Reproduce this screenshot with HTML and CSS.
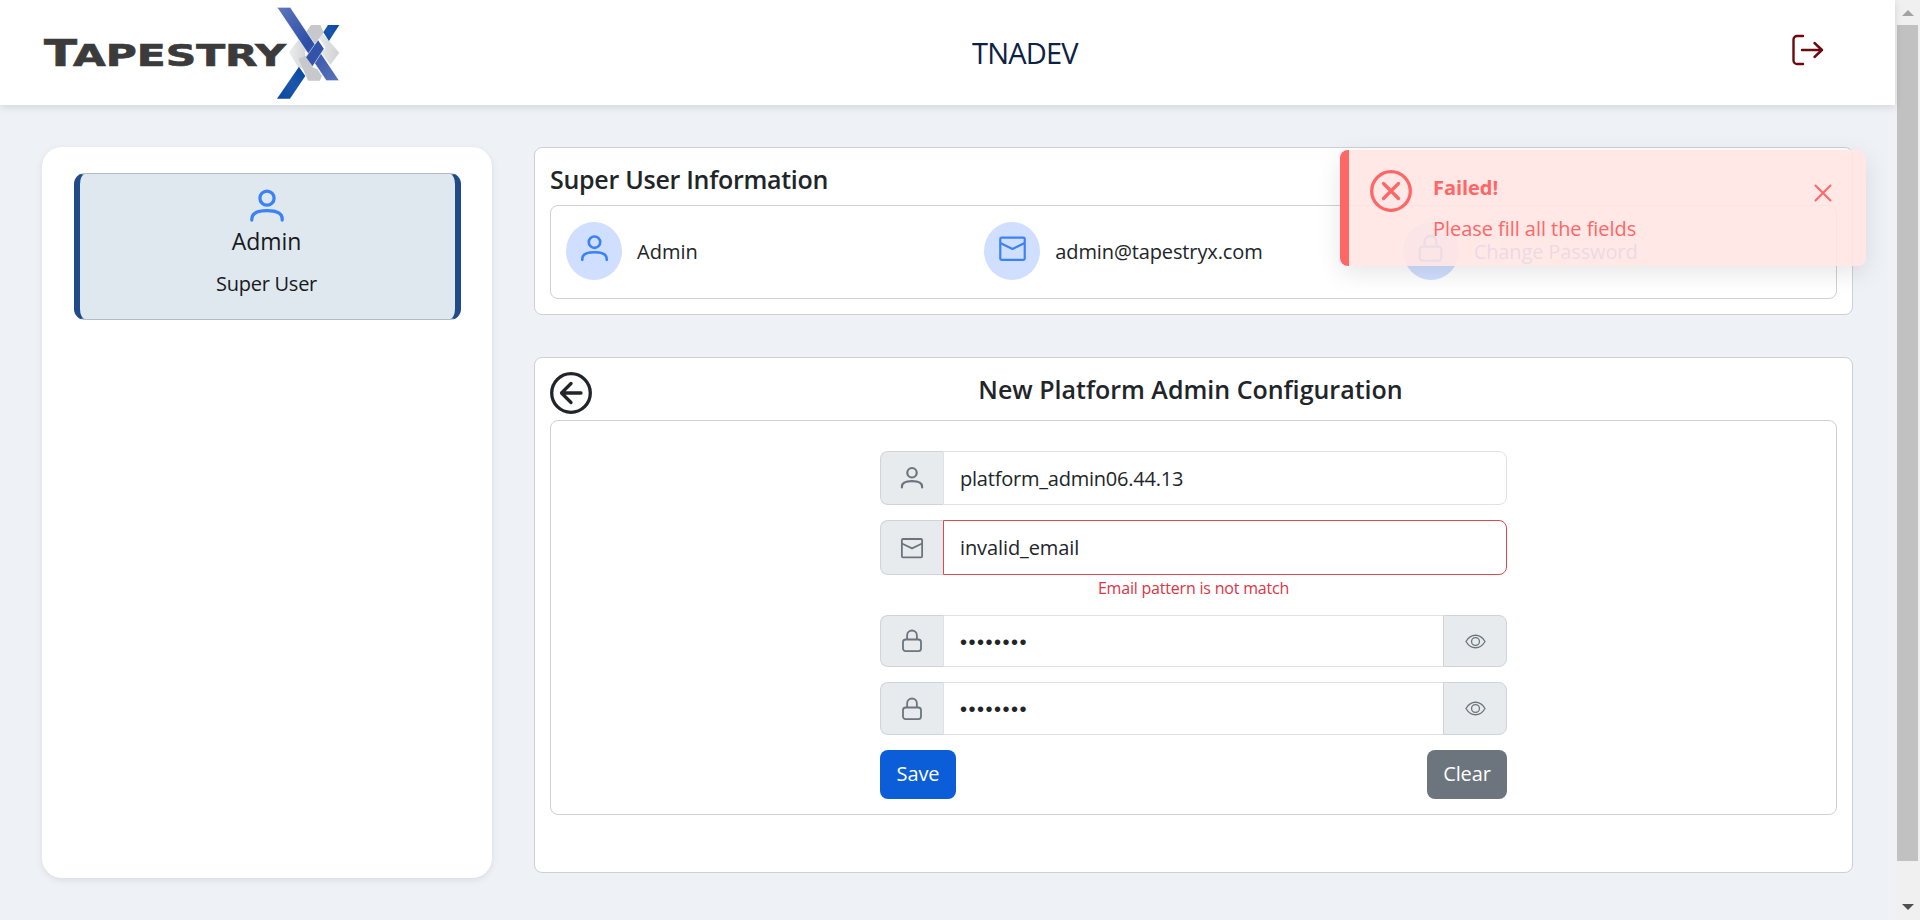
FILE: index.html
```
<!DOCTYPE html>
<html lang="en">
<head>
<meta charset="utf-8">
<title>TapestryX</title>
<link rel="stylesheet" href="styles.css">
</head>
<body>
<svg class="defs" width="0" height="0" aria-hidden="true">
  <symbol id="user" viewBox="0 0 32 32"><g fill="none" stroke="currentColor" stroke-width="2.900" stroke-linecap="round"><circle cx="16" cy="9" r="6.300"/><path d="M2.500 28.500v-1c0-4.400 3.600-7.400 13.500-7.400s13.500 3 13.500 7.400v1"/></g></symbol>
  <symbol id="mail" viewBox="0 0 32 32"><g fill="none" stroke="currentColor" stroke-width="2.400" stroke-linejoin="round"><rect x="2.500" y="4" width="27" height="24.500" rx="1.500"/><path d="M2.500 10 16 16.500 29.500 10"/></g></symbol>
  <symbol id="lock" viewBox="0 0 32 32"><g fill="none" stroke="currentColor" stroke-width="2.400"><rect x="4" y="14" width="24" height="15.500" rx="3.500"/><path d="M9.500 14V8.500a6.500 6.500 0 0 1 13 0V14"/></g></symbol>
  <symbol id="eye" viewBox="0 0 32 32"><g fill="none" stroke="currentColor" stroke-width="2"><path d="M1.500 16C5 10 10 6.500 16 6.500S27 10 30.500 16C27 22 22 25.500 16 25.500S5 22 1.500 16z"/><circle cx="16" cy="16" r="6"/></g></symbol>
</svg>
<div class="page">
  <header class="top">
    <svg class="logo" viewBox="0 0 300 105" role="img" aria-label="TapestryX">
      <defs>
        <linearGradient id="g1" x1="0" y1="0" x2="1" y2="1"><stop offset="0" stop-color="#5d77bd"/><stop offset=".5" stop-color="#2d4ea6"/><stop offset="1" stop-color="#5b75bb"/></linearGradient>
        <linearGradient id="g2" x1="0" y1="1" x2="1" y2="0"><stop offset="0" stop-color="#0546a0"/><stop offset=".5" stop-color="#1c56aa"/><stop offset="1" stop-color="#0546a0"/></linearGradient>
        <linearGradient id="g3" x1="0" y1="0" x2="1" y2="0"><stop offset="0" stop-color="#eceeee"/><stop offset="1" stop-color="#cfd1d2"/></linearGradient>
      </defs>
      <text class="mark" x="2" y="65.500" font-size="37" textLength="33" lengthAdjust="spacingAndGlyphs">T</text>
      <text class="mark" x="31" y="65.500" font-size="31" textLength="213" lengthAdjust="spacingAndGlyphs">APESTRY</text>
      <g transform="translate(-12 0) scale(.3333)">
        <path fill="url(#g3)" d="M862 76l14 22 52 60-27 37-26-36 12-16-17-24-14-22z"/>
        <path fill="#c6c8c9" d="M843 75h28l10 22-17 23-12 16-26-36z"/>
        <path fill="url(#g3)" d="M805 120l-28 37 27 44 28 8-8-52 12-16z"/>
        <path fill="#c6c8c9" d="M806 176l28-12 14 38 14 6 14 20-6 14h-36z"/>
        <path fill="url(#g1)" stroke="#fff" stroke-width="2" d="M741 22h40l147 220h-39z"/>
        <path fill="url(#g2)" d="M741 296h39l46-68-19-28z"/>
        <path fill="url(#g2)" d="M928 75h-34l-14 22 17 26z"/>
        <path fill="#3353ab" d="M864 120l18 27-34 52-20-28z"/>
        <path fill="none" stroke="#dfe6f5" stroke-width="2" d="M828 171l36-51M848 199l34-52"/>
      </g>
    </svg>
    <div class="tenant"><span class="t-tenant">TNADEV</span></div>
    <svg class="logout" viewBox="0 0 32 32"><g fill="none" stroke="#6b0a0e" stroke-width="2.400" stroke-linecap="round" stroke-linejoin="round"><path d="M11 2H5a3.500 3.500 0 0 0-3.500 3.500v21A3.500 3.500 0 0 0 5 30h6M10 16h20M22.500 9l7.500 7-7.500 7"/></g></svg>
  </header>
  <main class="content">
    <aside class="side">
      <div class="who">
        <svg class="who-icon"><use href="#user"/></svg>
        <div class="who-name"><span>Admin</span></div>
        <div class="who-role"><span>Super User</span></div>
      </div>
    </aside>
    <div class="main">
      <section class="card info">
        <h1 class="h t-info">Super User Information</h1>
        <div class="box info-row">
          <div class="cell"><i class="dot"><svg><use href="#user"/></svg></i><span class="t-admin">Admin</span></div>
          <div class="cell"><i class="dot"><svg><use href="#mail"/></svg></i><span class="t-mail">admin@tapestryx.com</span></div>
          <div class="cell link"><i class="dot"><svg><use href="#lock"/></svg></i><span class="t-change">Change Password</span></div>
        </div>
      </section>
      <section class="card config">
        <div class="config-head">
          <svg class="back" viewBox="0 0 42 42"><g fill="none" stroke="#212529" stroke-width="3.300" stroke-linecap="round" stroke-linejoin="round"><circle cx="21" cy="21" r="19.300"/><path d="M31 21H11.500M21 11.500 11.500 21l9.500 9.500"/></g></svg>
          <h2 class="h"><span class="t-config">New Platform Admin Configuration</span></h2>
        </div>
        <div class="box form-box">
          <form class="form">
            <div class="group g-name"><i class="addon"><svg><use href="#user"/></svg></i><div class="field"><span class="t-name">platform_admin06.44.13</span></div></div>
            <div class="group g-mail"><i class="addon"><svg><use href="#mail"/></svg></i><div class="field bad"><span class="t-invalid">invalid_email</span></div></div>
            <div class="error"><span class="t-error">Email pattern is not match</span></div>
            <div class="group g-pw"><i class="addon"><svg><use href="#lock"/></svg></i><div class="field"><span class="dots">••••••••</span></div><i class="addon end"><svg><use href="#eye"/></svg></i></div>
            <div class="group g-pw2"><i class="addon"><svg><use href="#lock"/></svg></i><div class="field"><span class="dots">••••••••</span></div><i class="addon end"><svg><use href="#eye"/></svg></i></div>
            <div class="actions"><button type="button" class="btn save">Save</button><button type="button" class="btn clear">Clear</button></div>
          </form>
        </div>
      </section>
    </div>
  </main>
  <div class="toast">
    <svg class="toast-icon" viewBox="0 0 42 42"><g fill="none" stroke="#ff6666" stroke-width="3.300" stroke-linecap="round"><circle cx="21" cy="21" r="19.300"/><path d="M13.500 13.500l15 15M28.500 13.500l-15 15"/></g></svg>
    <div class="toast-text"><b class="t-failed">Failed!</b><span class="t-fill">Please fill all the fields</span></div>
    <svg class="close" viewBox="0 0 18 18"><path d="M1.500 1.500l15 15M16.500 1.500l-15 15" fill="none" stroke="#ff6666" stroke-width="2" stroke-linecap="round"/></svg>
  </div>
</div>
<div class="scroll"><i class="up"></i><i class="thumb"></i><i class="down"></i></div>
</body>
</html>
```
FILE: styles.css
```
* { box-sizing: border-box; }
body { margin: 0; width: 1920px; height: 920px; overflow: hidden; display: flex; background: #eef1f6; color: #212529; font: 20px/32px "Open Sans", "Noto Sans", sans-serif; white-space: nowrap; }
.defs { position: absolute; }
svg { display: block; flex: none; }
.page { position: relative; width: 1895px; height: 920px; }
.top { height: 105px; background: #fff; box-shadow: 0 2px 8px rgba(0,0,0,.12); display: flex; align-items: center; padding: 0 69px 0 42px; }
.logo { width: 300px; height: 105px; }
.mark { font-family: "DejaVu Sans", sans-serif; font-weight: bold; fill: #3b3b3b; stroke: #3b3b3b; stroke-width: .7px; }
.tenant { width: 1368px; padding-left: 630px; font-size: 29px; line-height: 40px; color: #0c2244; }
.t-tenant { letter-spacing: -.8px; }
.logout { width: 32px; height: 32px; margin: -6px 0 0 82px; }
.content { display: flex; gap: 42px; padding: 42px; }
.side { width: 450px; height: 731px; border-radius: 20px; background: #fff; box-shadow: 0 2px 7px rgba(0,0,0,.09); padding: 26px 31px 0 32px; }
.who { height: 147px; border: 1px solid #b3bcc6; border-left: 6px solid #204a8a; border-right: 6px solid #204a8a; border-radius: 11px; background: #dfe7ef; display: flex; flex-direction: column; align-items: center; color: #181a1c; padding: 14px 2px 0 0; }
.who-icon { width: 38px; height: 36px; color: #3b82f6; }
.who-name { font-size: 23px; line-height: 34px; letter-spacing: -.1px; }
.who-role { margin-top: 10px; letter-spacing: -.25px; }
.main { width: 1319px; display: flex; flex-direction: column; gap: 42px; }
.card { background: #fff; border: 1px solid #ced0d3; border-radius: 8px; padding: 15px; }
.box { border: 1px solid #ced0d3; border-radius: 8px; }
.h { margin: 0; font-size: 25px; line-height: 32px; font-weight: 600; }
.info { height: 168px; }
.t-info { height: 42px; letter-spacing: -.28px; }
.info-row { height: 94px; display: flex; padding: 16px 15px; }
.cell { width: 419px; display: flex; align-items: flex-start; gap: 15px; line-height: 60px; }
.t-mail, .t-change { letter-spacing: -.12px; }
.dot { width: 56px; height: 58px; border-radius: 50%; background: #d0dfff; color: #3b82f6; display: flex; justify-content: center; padding-top: 12px; }
.dot svg { width: 29px; height: 29px; }
.link { color: #3b66f0; }
.config { height: 516px; }
.config-head { height: 47px; display: flex; align-items: flex-start; }
.back { width: 42px; height: 42px; margin-top: -1px; }
.config-head .h { flex: 1; text-align: center; padding-right: 48px; }
.form-box { height: 395px; padding: 30px 0 0 329px; }
.form { width: 627px; }
.group { display: flex; height: 53px; margin-bottom: 15px; }
.g-name { height: 54px; }
.g-mail { height: 55px; margin-bottom: 0; }
.addon { width: 63px; flex: none; background: #e7ebee; border: 1px solid #ced4da; border-right: 0; border-radius: 8px 0 0 8px; display: flex; align-items: center; justify-content: center; color: #6c757d; }
.addon svg { width: 24px; height: 24px; }
.addon.end { width: 64px; border-radius: 0 8px 8px 0; border: 1px solid #ced4da; }
.addon.end svg { width: 21px; height: 21px; }
.field { flex: 1; border: 1px solid #dee2e6; border-radius: 0 8px 8px 0; display: flex; align-items: center; padding: 1px 0 0 16px; }
.t-name { letter-spacing: -.22px; }
.t-invalid { letter-spacing: -.1px; }
.g-pw .field, .g-pw2 .field { border-radius: 0; border-right: 0; }
.bad { border-color: #e0484f; }
.error { height: 40px; text-align: center; color: #dc3545; font-size: 16px; line-height: 26px; letter-spacing: -.2px; }
.g-pw { height: 52px; }
.dots { font-family: "Liberation Sans", sans-serif; font-size: 20px; letter-spacing: 1.500px; }
.actions { display: flex; justify-content: space-between; }
.btn { height: 49px; border: 0; border-radius: 8px; color: #fff; font: inherit; padding: 0 0 1px; letter-spacing: -.1px; }
.save { width: 76px; background: #0b5ed7; }
.clear { width: 80px; background: #6c757d; }
.toast { position: absolute; left: 1340px; top: 150px; width: 526px; height: 116px; border-left: 9px solid #ff6666; border-radius: 8px; background: rgba(255,229,227,.9); box-shadow: 0 7px 24px rgba(0,0,0,.1); color: #ff6666; display: flex; align-items: flex-start; padding: 20px 34px 0 21px; }
.toast-icon { width: 42px; height: 42px; }
.toast-text { width: 383px; margin-left: 21px; display: flex; flex-direction: column; letter-spacing: -.05px; }
.toast-text b { height: 43px; line-height: 36px; }
.close { width: 18px; height: 18px; margin-top: 14px; margin-left: -1px; }
.scroll { width: 25px; height: 920px; background: #f0f0f0; display: flex; flex-direction: column; align-items: center; padding-top: 10px; }
.up { border: 6px solid transparent; border-top: 0; border-bottom: 6px solid #a3a3a3; }
.thumb { width: 21px; height: 836px; margin-top: 9px; background: #c1c1c1; }
.down { border: 6px solid transparent; border-bottom: 0; border-top: 6px solid #505050; margin-top: 43px; }
```
